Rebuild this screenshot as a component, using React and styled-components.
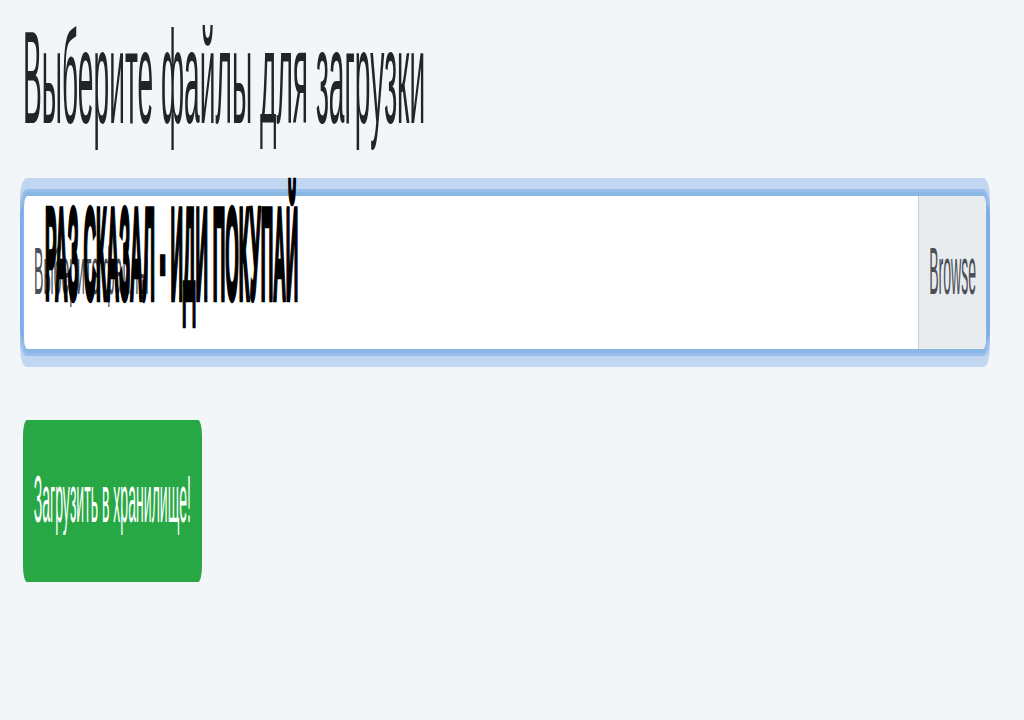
import React from 'react'
import styled, { createGlobalStyle } from 'styled-components';

const GlobalStyle = createGlobalStyle`
  html, body {
    margin: 0;
    padding: 0;
    background: #f3f6f9;
    font-family: "Liberation Sans", Arial, sans-serif;
  }
`;

const GLOW = 'rgba(40, 120, 220, 0.25)';

const App = () => {
  return (
    <>
      <GlobalStyle />
      <Page>
        <Heading>
          <Squish $sx={0.88} $sy={4.1}>Выберите файлы для загрузки</Squish>
        </Heading>

        <FileField>
          <FileLabel>
            <Squish $sx={0.88} $sy={4.2}>Выберите файлы</Squish>
          </FileLabel>
          <BrowseButton>
            <Squish $sx={0.88} $sy={4.2}>Browse</Squish>
          </BrowseButton>
          <Caption>РАЗ СКАЗАЛ - ИДИ ПОКУПАЙ</Caption>
        </FileField>

        <UploadButton type="button">
          <Squish $sx={0.88} $sy={4.2}>Загрузить в хранилище!</Squish>
        </UploadButton>
      </Page>
    </>
  );
};

export default App


const Page = styled.div`
  display: flex;
  flex-direction: column;
  align-items: flex-start;
  padding: 0 37px 0 23px;
  width: 100%;
  height: 720px;
  box-sizing: border-box;
`;

const Squish = styled.span`
  display: inline-block;
  line-height: 1;
  white-space: nowrap;
  transform: scale(${(p) => p.$sx}, ${(p) => p.$sy});
  transform-origin: left center;
`;

const Heading = styled.h2`
  margin: 0;
  height: 156px;
  display: flex;
  align-items: center;
  font-size: 32px;
  font-weight: 500;
  color: #212529;
`;

const FileField = styled.div`
  position: relative;
  margin-top: 36px;
  width: 100%;
  height: 161px;
  box-sizing: border-box;
  display: flex;
  background: #ffffff;
  border-style: solid;
  border-color: #8ab6e4;
  border-width: 4px 1px;
  border-radius: 4px / 16px;
  box-shadow:
    0 0 0 3px ${GLOW},
    0 -11px 0 3px ${GLOW},
    0 11px 0 3px ${GLOW};
`;

const FileLabel = styled.div`
  flex: 1;
  display: flex;
  align-items: center;
  padding-left: 10px;
  font-size: 16px;
  color: #495057;
  overflow: hidden;
`;

const BrowseButton = styled.div`
  width: 67px;
  display: flex;
  align-items: center;
  justify-content: center;
  background: #e9ecef;
  border-left: 1px solid #c3d3e6;
  border-radius: 0 3px 3px 0 / 0 12px 12px 0;
  font-size: 16px;
  color: #495057;

  span {
    transform-origin: center center;
  }
`;

const Caption = styled.span`
  position: absolute;
  left: 21px;
  top: 47px;
  display: inline-block;
  font-size: 20px;
  font-weight: 700;
  line-height: 1;
  color: #000000;
  -webkit-text-stroke: 1px #000000;
  white-space: nowrap;
  transform: scale(0.87, 6.5);
  transform-origin: left center;
`;

const UploadButton = styled.button`
  margin-top: 67px;
  width: 179px;
  height: 162px;
  padding: 0;
  display: flex;
  align-items: center;
  justify-content: center;
  background: #28a745;
  border: none;
  border-radius: 4px / 16px;
  color: #ffffff;
  font-family: "Liberation Sans", Arial, sans-serif;
  font-size: 16px;
  cursor: pointer;

  span {
    transform-origin: center center;
  }
`;
